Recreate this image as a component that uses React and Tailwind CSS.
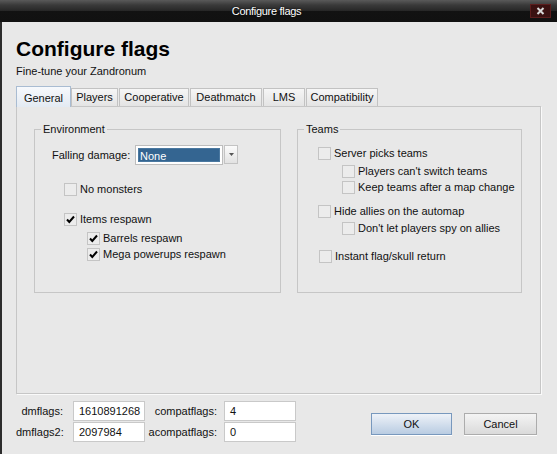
import React from 'react';

const Check = () => (
    <svg width="11" height="11" viewBox="0 0 11 11" className="block">
        <path d="M2 5.5 L4.3 8 L9 2.5" fill="none" stroke="#000" strokeWidth="2" />
    </svg>
);

const Box = ({ checked, label, className = '' }) => (
    <div className={`flex items-center gap-[3px] h-[13px] ${className}`}>
        <div className="w-[13px] h-[13px] shrink-0 border border-[#c4c4c4] bg-[#ececec] flex items-center justify-center">
            {checked && <Check />}
        </div>
        <span className="leading-[13px] whitespace-nowrap">{label}</span>
    </div>
);

const tabs = [
    { name: 'Players', w: 'w-[47px]' },
    { name: 'Cooperative', w: 'w-[70px] ml-[1px]' },
    { name: 'Deathmatch', w: 'w-[72px] ml-[1px]' },
    { name: 'LMS', w: 'w-[42px] ml-[1px]' },
    { name: 'Compatibility', w: 'w-[72px] ml-[1px]' },
];

const Field = ({ value }) => (
    <div className="h-[20px] border border-[#c9c9c9] bg-white px-[5px] leading-[18px]">{value}</div>
);

const App = () => {
    return (
        <div className="w-[557px] h-[454px] flex flex-col bg-[#e8e8e8] text-[11px] text-[#111] font-['Liberation_Sans',Arial,sans-serif] overflow-hidden">
            {/* title bar */}
            <div className="relative h-[22px] shrink-0 flex items-center justify-center pr-[24px] bg-[linear-gradient(to_bottom,#5a5a5a_0,#3a3a3a_5px,#262626_11px,#121212_11px,#111_22px)]">
                <span className="text-white text-[11px] tracking-[-0.3px] [text-shadow:0_0_2px_#000]">Configure flags</span>
                <div className="absolute left-[530px] top-[4px] w-[21px] h-[14px] border border-[#5c1d1d] bg-[#3a1111] flex items-center justify-center">
                    <svg width="9" height="8" viewBox="0 0 9 8">
                        <path d="M1.5 1 L7.5 7 M7.5 1 L1.5 7" stroke="#d8d8d8" strokeWidth="2" />
                    </svg>
                </div>
            </div>

            {/* body */}
            <div className="flex-1 flex flex-col border-l-2 border-[#2c2c2c] pl-[14px]">
                <h1 className="mt-[15px] text-[21px] leading-[24px] font-bold text-black">Configure flags</h1>
                <p className="mt-[4px] leading-[13px]">Fine-tune your Zandronum</p>

                {/* tabs */}
                <div className="mt-[8px] h-[20px] flex items-end">
                    <div className="relative z-10 -mb-px w-[55px] h-[21px] border border-b-0 border-[#a9bcd2] bg-linear-to-b from-[#f7f9fc] to-[#e3eaf2] flex items-start justify-center pt-[3px]">
                        General
                    </div>
                    {tabs.map(t => (
                        <div key={t.name} className={`${t.w} h-[18px] border border-b-0 border-[#c2c2c2] bg-linear-to-b from-[#f6f6f6] to-[#e4e4e4] flex items-center justify-center`}>
                            {t.name}
                        </div>
                    ))}
                </div>

                {/* pane */}
                <div className="w-[525px] h-[288px] border border-[#c6c6c6] shadow-[1px_1px_0_#fafafa] flex gap-[16px] pl-[17px] pt-[16px]">
                    <fieldset className="w-[247px] h-[170px] border border-[#c6c6c6] px-[6px]">
                        <legend className="px-[2px] leading-[13px]">Environment</legend>
                        <div className="mt-[9px] ml-[11px] flex items-start">
                            <span className="w-[83px] leading-[20px]">Falling damage:</span>
                            <div className="w-[88px] h-[20px] border border-[#bdbdbd] bg-white p-[2px]">
                                <div className="h-full bg-[#346591] text-white pl-[1px] leading-[14px] border border-[#4a78a0]">None</div>
                            </div>
                            <div className="ml-[1px] w-[14px] h-[19px] border border-[#c3c3c3] bg-linear-to-b from-[#fbfbfb] to-[#e2e2e2] flex items-center justify-center">
                                <svg width="5" height="3" viewBox="0 0 5 3">
                                    <path d="M0 0 H5 L2.5 3 Z" fill="#555" />
                                </svg>
                            </div>
                        </div>
                        <Box className="mt-[18px] ml-[23px]" label="No monsters" />
                        <Box className="mt-[17px] ml-[23px]" checked label="Items respawn" />
                        <Box className="mt-[6px] ml-[46px]" checked label="Barrels respawn" />
                        <Box className="mt-[3px] ml-[46px]" checked label="Mega powerups respawn" />
                    </fieldset>

                    <fieldset className="w-[225px] h-[170px] border border-[#c6c6c6] px-[6px]">
                        <legend className="px-[2px] leading-[13px]">Teams</legend>
                        <Box className="mt-[11px] ml-[14px]" label="Server picks teams" />
                        <Box className="mt-[5px] ml-[38px]" label="Players can't switch teams" />
                        <Box className="mt-[3px] ml-[38px]" label="Keep teams after a map change" />
                        <Box className="mt-[11px] ml-[14px]" label="Hide allies on the automap" />
                        <Box className="mt-[4px] ml-[38px]" label="Don't let players spy on allies" />
                        <Box className="mt-[15px] ml-[15px]" label="Instant flag/skull return" />
                    </fieldset>
                </div>

                {/* bottom */}
                <div className="mt-[7px] flex items-start">
                    <div className="grid grid-cols-[57px_72px_79px_72px] gap-y-[1px] items-center">
                        <span className="text-right pr-[10px]">dmflags:</span>
                        <Field value="1610891268" />
                        <span className="text-right pr-[7px]">compatflags:</span>
                        <Field value="4" />
                        <span className="text-right pr-[10px]">dmflags2:</span>
                        <Field value="2097984" />
                        <span className="text-right pr-[7px]">acompatflags:</span>
                        <Field value="0" />
                    </div>
                    <button className="ml-[75px] mt-[12px] w-[81px] h-[22px] border border-[#7898bd] bg-linear-to-b from-[#eef2f8] to-[#b9cce2] shadow-[0_1px_0_#fff] text-[#111]">
                        OK
                    </button>
                    <button className="ml-[12px] mt-[12px] w-[73px] h-[22px] border border-[#acacac] bg-linear-to-b from-[#f4f4f4] to-[#dadada] shadow-[0_1px_0_#fff] text-[#111]">
                        Cancel
                    </button>
                </div>
            </div>
        </div>
    );
};

export default App;
